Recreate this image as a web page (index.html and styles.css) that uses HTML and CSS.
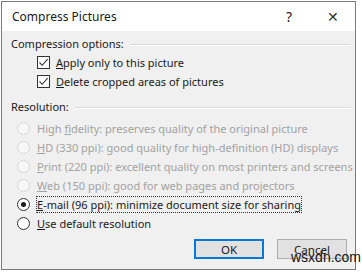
FILE: index.html
```html
<!DOCTYPE html>
<html lang="en">
<head>
<meta name="viewport" content="width=device-width, initial-scale=1">
<title>Compress Pictures</title>
<link rel="stylesheet" href="styles.css">
</head>
<body>

<div class="dialog">
  <div class="titlebar">
    <span class="title">Compress Pictures</span>
    <span class="help">?</span>
    <span class="close">&#x2715;</span>
  </div>

  <div class="content">
    <div class="group-head"><span>Compression options:</span><span class="rule"></span></div>

    <div class="row check-row">
      <span class="checkbox"><svg width="11" height="11" viewBox="0 0 11 11"><path d="M1.5 5.5 L4.2 8.3 L9.6 2.2" fill="none" stroke="#333" stroke-width="1.1"/></svg></span>
      <span><u>A</u>pply only to this picture</span>
    </div>
    <div class="row check-row">
      <span class="checkbox"><svg width="11" height="11" viewBox="0 0 11 11"><path d="M1.5 5.5 L4.2 8.3 L9.6 2.2" fill="none" stroke="#333" stroke-width="1.1"/></svg></span>
      <span><u>D</u>elete cropped areas of pictures</span>
    </div>

    <div class="group-head res-head"><span>Resolution:</span><span class="rule"></span></div>

    <div class="row radio-row disabled">
      <span class="radio"></span>
      <span>High <u>f</u>idelity: preserves quality of the original picture</span>
    </div>
    <div class="row radio-row disabled">
      <span class="radio"></span>
      <span><u>H</u>D (330 ppi): good quality for high-definition (HD) displays</span>
    </div>
    <div class="row radio-row disabled">
      <span class="radio"></span>
      <span><u>P</u>rint (220 ppi): excellent quality on most printers and screens</span>
    </div>
    <div class="row radio-row disabled">
      <span class="radio"></span>
      <span><u>W</u>eb (150 ppi): good for web pages and projectors</span>
    </div>
    <div class="row radio-row">
      <span class="radio checked"></span>
      <span class="focused"><u>E</u>-mail (96 ppi): minimize document size for sharing</span>
    </div>
    <div class="row radio-row">
      <span class="radio"></span>
      <span><u>U</u>se default resolution</span>
    </div>

    <div class="buttons">
      <button class="btn default">OK</button>
      <button class="btn">Cancel</button>
    </div>
  </div>

  <span class="watermark">wsxdn.com</span>
</div>

</body>
</html>
```

FILE: styles.css
```css
body {
  margin: 0;
  background: #fff;
  font-family: 'Noto Sans', 'Open Sans', sans-serif;
  font-size: 11px;
  color: #1a1a1a;
}
.dialog {
  position: relative;
  margin: 1px 0 0 1px;
  width: 353px;
  height: 267px;
  border: 1px solid #7a7a7a;
  background: #f0f0f0;
  display: flex;
  flex-direction: column;
}
.titlebar {
  height: 29px;
  background: #fff;
  display: flex;
  align-items: center;
  font-size: 12px;
}
.title {
  margin-left: 10px;
  flex: 1;
}
.help {
  width: 20px;
  margin-right: 24px;
  text-align: center;
  font-size: 14px;
}
.close {
  width: 20px;
  margin-right: 12px;
  text-align: center;
  font-size: 14px;
  color: #333;
}
.content {
  flex: 1;
  padding: 3px 0 0 9px;
  display: flex;
  flex-direction: column;
}
.group-head {
  height: 19px;
  display: flex;
  align-items: center;
}
.group-head .rule {
  flex: 1;
  height: 0;
  border-top: 1px solid #dcdcdc;
  border-bottom: 1px solid #fff;
  margin: 2px 4px 0 6px;
}
.res-head {
  margin-top: 6px;
  margin-bottom: 3px;
}
.row {
  height: 19px;
  display: flex;
  align-items: center;
  white-space: nowrap;
}
.check-row {
  padding-left: 26px;
}
.checkbox {
  width: 11px;
  height: 11px;
  border: 1px solid #333;
  background: #fff;
  margin-right: 6px;
  display: flex;
}
.radio-row {
  padding-left: 6px;
}
.radio {
  width: 11px;
  height: 11px;
  border: 1px solid #333;
  border-radius: 50%;
  background: #fff;
  margin-right: 7px;
  position: relative;
}
.radio.checked::after {
  content: '';
  position: absolute;
  left: 3px;
  top: 3px;
  width: 5px;
  height: 5px;
  border-radius: 50%;
  background: #1a1a1a;
}
.disabled {
  color: #a2a2a2;
}
.disabled .radio {
  border-color: #d6d6d6;
  background: #f7f7f7;
}
.focused {
  outline: 1px dotted #333;
  outline-offset: 0;
  line-height: 15px;
}
.buttons {
  margin-top: 6px;
  display: flex;
  justify-content: flex-end;
  gap: 13px;
  padding-right: 8px;
}
.btn {
  width: 70px;
  height: 20px;
  padding: 0;
  font-family: inherit;
  font-size: 11.5px;
  color: #1a1a1a;
  background: #e1e1e1;
  border: 1px solid #adadad;
}
.btn.default {
  border: 2px solid #0078d7;
}
.watermark {
  position: absolute;
  left: 289px;
  top: 247px;
  font-family: 'Liberation Sans', sans-serif;
  font-size: 14px;
  color: #111;
}
```
